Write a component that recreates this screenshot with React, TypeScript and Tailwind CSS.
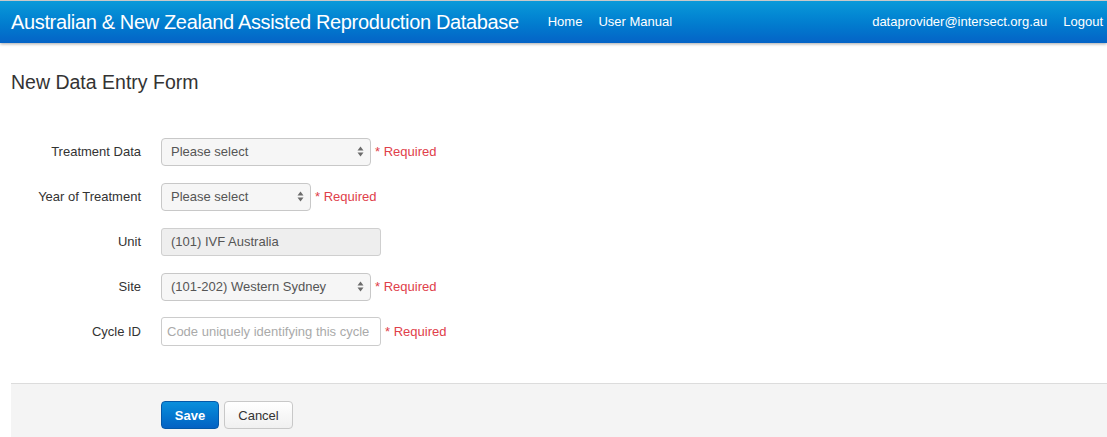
import { ReactNode } from 'react'

function Arrows() {
  return (
    <svg width="7" height="11" viewBox="0 0 7 11" className="shrink-0">
      <path d="M3.5 0.5 L6.5 4.5 L0.5 4.5 Z" fill="#6b6b6b" />
      <path d="M3.5 10.5 L6.5 6.5 L0.5 6.5 Z" fill="#6b6b6b" />
    </svg>
  )
}

function Required() {
  return <span className="text-[13px] text-[#e0404a] ml-[4px]">* Required</span>
}

function Row({ label, children }: { label: string; children: ReactNode }) {
  return (
    <div className="flex items-center h-[45px]">
      <label className="w-[141px] text-right text-[13px] text-[#333]">{label}</label>
      <div className="ml-[20px] flex items-center">{children}</div>
    </div>
  )
}

function Select({ value, width }: { value: string; width: string }) {
  return (
    <div className={`${width} h-[28px] flex items-center justify-between pl-[9px] pr-[6px] rounded-[4px] border border-[#c8c8c8] bg-[#f6f6f6] text-[13px] text-[#555]`}>
      <span>{value}</span>
      <Arrows />
    </div>
  )
}

export default function App() {
  return (
    <div className="w-[1107px] h-[437px] overflow-hidden bg-white" style={{ fontFamily: '"Liberation Sans", Arial, sans-serif' }}>
      <div className="h-[43px] border-t border-[#c9c9c9] bg-gradient-to-b from-[#0b9ad9] to-[#0563c6] shadow-[0_1px_3px_rgba(0,0,0,0.35)] flex items-center text-white">
        <div className="pl-[11px] text-[20px] tracking-[-0.35px]">Australian &amp; New Zealand Assisted Reproduction Database</div>
        <div className="ml-[29px] flex gap-[16px] text-[13px]">
          <span>Home</span>
          <span>User Manual</span>
        </div>
        <div className="ml-auto pr-[4px] flex gap-[16px] text-[13px]">
          <span>dataprovider@intersect.org.au</span>
          <span>Logout</span>
        </div>
      </div>

      <h1 className="mt-[25px] ml-[11px] text-[19.5px] text-[#333]">New Data Entry Form</h1>

      <div className="mt-[32px]">
        <Row label="Treatment Data">
          <Select value="Please select" width="w-[210px]" />
          <Required />
        </Row>
        <Row label="Year of Treatment">
          <Select value="Please select" width="w-[150px]" />
          <Required />
        </Row>
        <Row label="Unit">
          <div className="w-[220px] h-[28px] flex items-center pl-[9px] rounded-[3px] border border-[#cfcfcf] bg-[#eeeeee] text-[13px] text-[#555]">(101) IVF Australia</div>
        </Row>
        <Row label="Site">
          <Select value="(101-202) Western Sydney" width="w-[210px]" />
          <Required />
        </Row>
        <Row label="Cycle ID">
          <div className="w-[220px] h-[29px] flex items-center pl-[5px] rounded-[3px] border border-[#cccccc] bg-white text-[13px] text-[#aaa]">Code uniquely identifying this cycle</div>
          <Required />
        </Row>
      </div>

      <div className="mt-[29px] ml-[11px] h-[60px] border-t border-[#dcdcdc] bg-[#f4f4f4] flex items-start pt-[17px] pl-[150px] gap-[5px]">
        <button className="h-[28px] w-[58px] rounded-[4px] border border-[#0458a8] bg-gradient-to-b from-[#0b8fdc] to-[#0562c3] text-white text-[13px] font-bold">Save</button>
        <button className="h-[28px] w-[69px] rounded-[4px] border border-[#c8c8c8] bg-gradient-to-b from-white to-[#f0f0f0] text-[#333] text-[13px]">Cancel</button>
      </div>
    </div>
  )
}
